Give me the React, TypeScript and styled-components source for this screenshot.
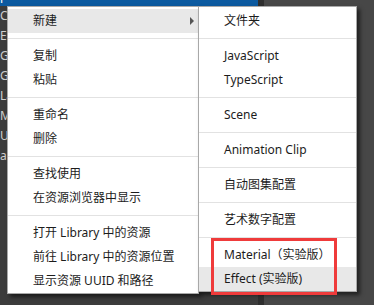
import React from 'react';
import styled, { createGlobalStyle } from 'styled-components';

const GlobalStyle = createGlobalStyle`
  html, body {
    margin: 0;
    padding: 0;
    background: #474747;
  }
  body {
    font-family: "Noto Sans", "Noto Sans CJK SC", sans-serif;
  }
`;

const Screen = styled.div`
  position: relative;
  width: 374px;
  height: 305px;
  overflow: hidden;
  display: flex;
  background: #474747;
`;

const AssetPanel = styled.div`
  width: 258px;
  flex-shrink: 0;
  background: #3c3c3c;
  overflow: hidden;
`;

const Divider = styled.div`
  width: 6px;
  flex-shrink: 0;
  background: #2e2e2e;
`;

const Inspector = styled.div`
  flex: 1;
  background: #474747;
`;

const TreeList = styled.div`
  margin-top: -14px;
`;

const TreeRow = styled.div<{ $selected?: boolean }>`
  height: 20px;
  line-height: 20px;
  padding-left: 0;
  font-size: 12px;
  color: ${p => (p.$selected ? '#ffffff' : '#cfcfcf')};
  background: ${p => (p.$selected ? '#0c5aa0' : 'transparent')};
  white-space: nowrap;
`;

const Menu = styled.div<{ $left: number; $width: number }>`
  position: absolute;
  top: 6px;
  left: ${p => p.$left}px;
  width: ${p => p.$width}px;
  box-sizing: border-box;
  background: #ffffff;
  border: 1px solid #a8a8a8;
  padding: 2px 0 0;
  box-shadow: 3px 3px 4px rgba(0, 0, 0, 0.55);
`;

const Item = styled.div<{ $active?: boolean }>`
  position: relative;
  height: 24px;
  line-height: 24px;
  padding-left: 25px;
  font-size: 12px;
  color: #1c1c1c;
  white-space: nowrap;
  background: ${p => (p.$active ? '#e8e8e8' : 'transparent')};
`;

const Arrow = styled.span`
  position: absolute;
  right: 4px;
  top: 8px;
  width: 0;
  height: 0;
  border-top: 4px solid transparent;
  border-bottom: 4px solid transparent;
  border-left: 4px solid #555555;
`;

const Separator = styled.div`
  height: 1px;
  margin: 5px 0;
  background: #e2e2e2;
`;

const Highlight = styled.div`
  position: absolute;
  left: 12px;
  top: 231px;
  width: 126px;
  height: 57px;
  box-sizing: border-box;
  border: 3px solid #ef3b3b;
`;

const treeNames = ['Script', 'Common', 'Editor', 'Game', 'Gameplay', 'Launch', 'Main', 'UI', 'all'];

type Entry = { label: string; active?: boolean; sub?: boolean } | 'sep';

const mainItems: Entry[] = [
  { label: '新建', active: true, sub: true },
  'sep',
  { label: '复制' },
  { label: '粘贴' },
  'sep',
  { label: '重命名' },
  { label: '删除' },
  'sep',
  { label: '查找使用' },
  { label: '在资源浏览器中显示' },
  'sep',
  { label: '打开 Library 中的资源' },
  { label: '前往 Library 中的资源位置' },
  { label: '显示资源 UUID 和路径' },
];

const subItems: Entry[] = [
  { label: '文件夹' },
  'sep',
  { label: 'JavaScript' },
  { label: 'TypeScript' },
  'sep',
  { label: 'Scene' },
  'sep',
  { label: 'Animation Clip' },
  'sep',
  { label: '自动图集配置' },
  'sep',
  { label: '艺术数字配置' },
  'sep',
  { label: 'Material（实验版）' },
  { label: 'Effect (实验版)', active: true },
];

const renderEntries = (entries: Entry[]) =>
  entries.map((e, i) =>
    e === 'sep' ? (
      <Separator key={i} />
    ) : (
      <Item key={i} $active={e.active}>
        {e.label}
        {e.sub && <Arrow />}
      </Item>
    )
  );

const App: React.FC = () => {
  return (
    <>
      <GlobalStyle />
      <Screen>
        <AssetPanel>
          <TreeList>
            {treeNames.map((name, i) => (
              <TreeRow key={name} $selected={i === 0}>
                {i === 0 ? 'pt' : name}
              </TreeRow>
            ))}
          </TreeList>
        </AssetPanel>
        <Divider />
        <Inspector />

        <Menu $left={7} $width={192}>
          {renderEntries(mainItems)}
        </Menu>
        <Menu $left={198} $width={159}>
          {renderEntries(subItems)}
          <Highlight />
        </Menu>
      </Screen>
    </>
  );
};

export default App;
